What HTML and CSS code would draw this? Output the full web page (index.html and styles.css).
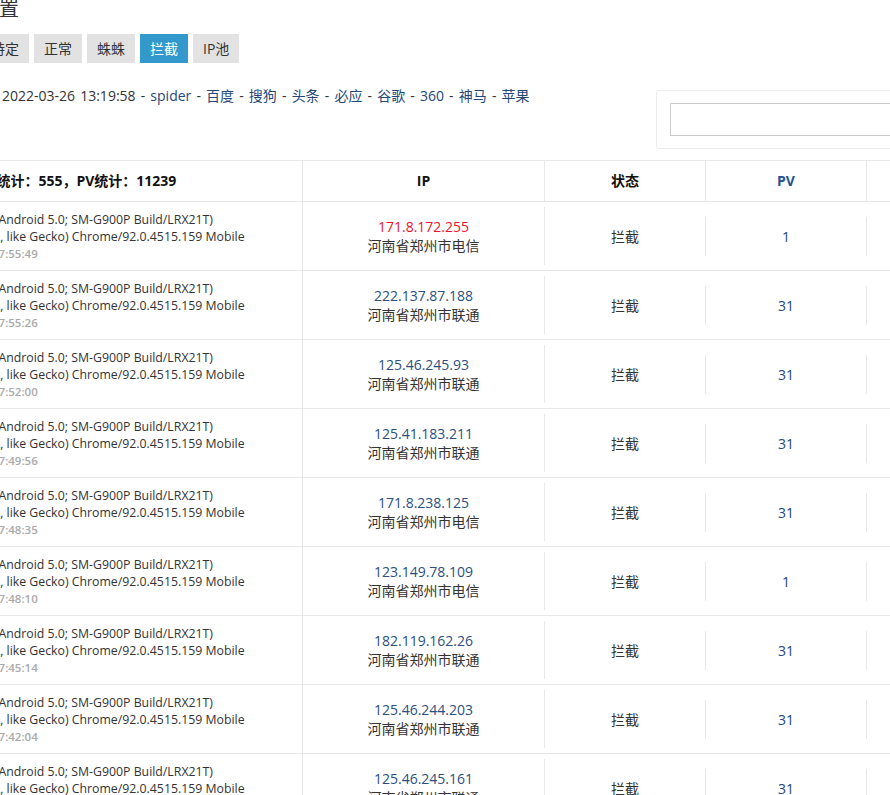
FILE: index.html
```html
<!DOCTYPE html>
<html lang="zh-CN">
<head>
<meta charset="utf-8">
<title>设置</title>
<link rel="stylesheet" href="styles.css">
</head>
<body>
<div class="page">
  <h2 class="title">设置</h2>
  <div class="tabs">
    <a class="tab" href="#">特定</a>
    <a class="tab" href="#">正常</a>
    <a class="tab" href="#">蛛蛛</a>
    <a class="tab active" href="#">拦截</a>
    <a class="tab" href="#">IP池</a>
  </div>
  <div class="toolbar">
    <div class="info"><span class="stamp">2022-03-26 13:19:58</span> - <a href="#">spider</a> - <a href="#">百度</a> - <a href="#">搜狗</a> - <a href="#">头条</a> - <a href="#">必应</a> - <a href="#">谷歌</a> - <a href="#">360</a> - <a href="#">神马</a> - <a href="#">苹果</a></div>
    <div class="search"><input class="search-input" type="text"></div>
  </div>
  <div class="table">
    <div class="row head">
      <div class="cell c-ua">IP统计：555，PV统计：11239</div>
      <div class="cell">IP</div>
      <div class="cell">状态</div>
      <div class="cell"><a class="sort" href="#">PV</a></div>
      <div class="cell"></div>
    </div>
    <div class="row">
      <div class="cell c-ua"><span class="l1">Mozilla/5.0 (Linux; Android 5.0; SM-G900P Build/LRX21T)</span><span class="l2">AppleWebKit/537.36 (KHTML, like Gecko) Chrome/92.0.4515.159 Mobile</span><span class="time">2022-03-26 17:55:49</span></div>
      <div class="cell c-ip"><a class="ip hot" href="#">171.8.172.255</a><span class="area">河南省郑州市电信</span></div>
      <div class="cell">拦截</div>
      <div class="cell pv">1</div>
      <div class="cell c-blank"></div>
    </div>
    <div class="row">
      <div class="cell c-ua"><span class="l1">Mozilla/5.0 (Linux; Android 5.0; SM-G900P Build/LRX21T)</span><span class="l2">AppleWebKit/537.36 (KHTML, like Gecko) Chrome/92.0.4515.159 Mobile</span><span class="time">2022-03-26 17:55:26</span></div>
      <div class="cell c-ip"><a class="ip" href="#">222.137.87.188</a><span class="area">河南省郑州市联通</span></div>
      <div class="cell">拦截</div>
      <div class="cell pv">31</div>
      <div class="cell c-blank"></div>
    </div>
    <div class="row">
      <div class="cell c-ua"><span class="l1">Mozilla/5.0 (Linux; Android 5.0; SM-G900P Build/LRX21T)</span><span class="l2">AppleWebKit/537.36 (KHTML, like Gecko) Chrome/92.0.4515.159 Mobile</span><span class="time">2022-03-26 17:52:00</span></div>
      <div class="cell c-ip"><a class="ip" href="#">125.46.245.93</a><span class="area">河南省郑州市联通</span></div>
      <div class="cell">拦截</div>
      <div class="cell pv">31</div>
      <div class="cell c-blank"></div>
    </div>
    <div class="row">
      <div class="cell c-ua"><span class="l1">Mozilla/5.0 (Linux; Android 5.0; SM-G900P Build/LRX21T)</span><span class="l2">AppleWebKit/537.36 (KHTML, like Gecko) Chrome/92.0.4515.159 Mobile</span><span class="time">2022-03-26 17:49:56</span></div>
      <div class="cell c-ip"><a class="ip" href="#">125.41.183.211</a><span class="area">河南省郑州市联通</span></div>
      <div class="cell">拦截</div>
      <div class="cell pv">31</div>
      <div class="cell c-blank"></div>
    </div>
    <div class="row">
      <div class="cell c-ua"><span class="l1">Mozilla/5.0 (Linux; Android 5.0; SM-G900P Build/LRX21T)</span><span class="l2">AppleWebKit/537.36 (KHTML, like Gecko) Chrome/92.0.4515.159 Mobile</span><span class="time">2022-03-26 17:48:35</span></div>
      <div class="cell c-ip"><a class="ip" href="#">171.8.238.125</a><span class="area">河南省郑州市电信</span></div>
      <div class="cell">拦截</div>
      <div class="cell pv">31</div>
      <div class="cell c-blank"></div>
    </div>
    <div class="row">
      <div class="cell c-ua"><span class="l1">Mozilla/5.0 (Linux; Android 5.0; SM-G900P Build/LRX21T)</span><span class="l2">AppleWebKit/537.36 (KHTML, like Gecko) Chrome/92.0.4515.159 Mobile</span><span class="time">2022-03-26 17:48:10</span></div>
      <div class="cell c-ip"><a class="ip" href="#">123.149.78.109</a><span class="area">河南省郑州市电信</span></div>
      <div class="cell">拦截</div>
      <div class="cell pv">1</div>
      <div class="cell c-blank"></div>
    </div>
    <div class="row">
      <div class="cell c-ua"><span class="l1">Mozilla/5.0 (Linux; Android 5.0; SM-G900P Build/LRX21T)</span><span class="l2">AppleWebKit/537.36 (KHTML, like Gecko) Chrome/92.0.4515.159 Mobile</span><span class="time">2022-03-26 17:45:14</span></div>
      <div class="cell c-ip"><a class="ip" href="#">182.119.162.26</a><span class="area">河南省郑州市联通</span></div>
      <div class="cell">拦截</div>
      <div class="cell pv">31</div>
      <div class="cell c-blank"></div>
    </div>
    <div class="row">
      <div class="cell c-ua"><span class="l1">Mozilla/5.0 (Linux; Android 5.0; SM-G900P Build/LRX21T)</span><span class="l2">AppleWebKit/537.36 (KHTML, like Gecko) Chrome/92.0.4515.159 Mobile</span><span class="time">2022-03-26 17:42:04</span></div>
      <div class="cell c-ip"><a class="ip" href="#">125.46.244.203</a><span class="area">河南省郑州市联通</span></div>
      <div class="cell">拦截</div>
      <div class="cell pv">31</div>
      <div class="cell c-blank"></div>
    </div>
    <div class="row">
      <div class="cell c-ua"><span class="l1">Mozilla/5.0 (Linux; Android 5.0; SM-G900P Build/LRX21T)</span><span class="l2">AppleWebKit/537.36 (KHTML, like Gecko) Chrome/92.0.4515.159 Mobile</span><span class="time">2022-03-26 17:40:37</span></div>
      <div class="cell c-ip"><a class="ip" href="#">125.46.245.161</a><span class="area">河南省郑州市联通</span></div>
      <div class="cell">拦截</div>
      <div class="cell pv">31</div>
      <div class="cell c-blank"></div>
    </div>
  </div>
</div>
</body>
</html>
```
FILE: styles.css
```css
html, body {
  margin: 0;
  padding: 0;
  overflow: hidden;
  background: #fff;
}
body {
  font-family: "Open Sans", "Noto Sans CJK SC", sans-serif;
  font-size: 14px;
  color: #333;
}
a { text-decoration: none; }

.page {
  margin-left: -21px;
  width: 1300px;
}

.title {
  margin: -2px 0 0;
  font-size: 20px;
  font-weight: normal;
  line-height: 22px;
  color: #333;
}

.tabs {
  display: flex;
  gap: 5px;
  margin: 14px 0 0 2px;
}
.tab {
  padding: 5px 10px;
  line-height: 19px;
  background: #e2e2e2;
  color: #333;
}
.tab.active {
  background: #3399cc;
  color: #fff;
}

.toolbar {
  display: grid;
  grid-template-columns: 677px 420px;
  align-items: start;
  margin-top: 23px;
}
.info {
  padding-left: 23px;
  line-height: 19px;
  word-spacing: 1.5px;
  white-space: nowrap;
}
.info a { color: #24477a; }
.search {
  margin-top: 4px;
  border: 1px solid #ececec;
  border-radius: 3px;
  padding: 12px 13px;
}
.search-input {
  display: block;
  width: 100%;
  height: 33px;
  box-sizing: border-box;
  border: 1px solid #ccc;
  border-radius: 0;
  margin: 0;
}

.table {
  margin: 11px 0 0 -155px;
  border-top: 1px solid #e8e8e8;
}
.row {
  display: grid;
  grid-template-columns: 479px 242px 161px 161px 200px;
  align-items: center;
  border-bottom: 1px solid #e8e8e8;
}
.row.head { align-items: stretch; }
.cell {
  box-sizing: border-box;
  border-right: 1px solid #e8e8e8;
  padding: 10px 12px;
  line-height: 19px;
  text-align: center;
}
.head .cell {
  font-weight: bold;
  color: #111;
  line-height: 20px;
}
.head .cell.c-ua {
  display: block;
  text-align: left;
  padding: 10px 12px 10px 159px;
  font-size: 14px;
  line-height: 20px;
  color: #111;
}
.sort { color: #24528f; }

.c-ua {
  align-self: stretch;
  display: flex;
  flex-direction: column;
  justify-content: center;
  padding: 9px 12px 8px;
  text-align: left;
  white-space: nowrap;
  font-size: 12.3px;
  line-height: 17px;
  color: #333;
}
.c-ua .l1 { margin-left: 56px; }
.c-ua .time {
  margin-left: 93px;
  font-size: 11.5px;
  font-weight: 600;
  color: #aaa;
}
.c-ip { display: flex; flex-direction: column; }
.ip { color: #2b4f80; }
.ip.hot { color: #e8142e; }
.area { color: #333; }
.pv { color: #24477a; }
.c-blank { align-self: stretch; }
```
